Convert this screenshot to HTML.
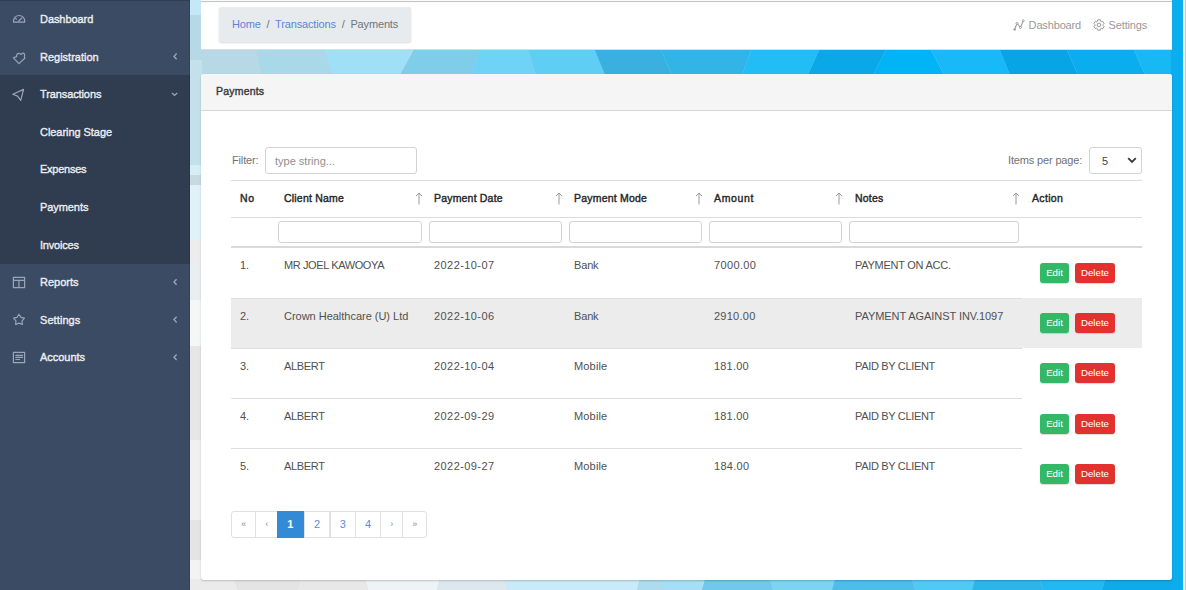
<!DOCTYPE html>
<html><head><meta charset="utf-8">
<style>
*{box-sizing:border-box;margin:0;padding:0}
html,body{width:1186px;height:590px;overflow:hidden;background:#fff;font-family:"Liberation Sans",sans-serif}
#sb{position:absolute;left:0;top:0;width:190px;height:590px;background:#3c4b64}
#sb .it{position:absolute;left:0;width:190px;height:37.6px;color:rgba(255,255,255,.82);font-size:11px;font-weight:normal;-webkit-text-stroke:0.45px rgba(255,255,255,.82)}
#sb .it span.t{position:absolute;left:40px;top:13px;line-height:12px}
#sb .ic{position:absolute;left:13px;top:12px;width:13px;height:13px}
#sb .car{position:absolute;left:172px;top:14px;width:8px;height:10px}
#sb .tl{position:absolute;left:0;top:0;width:190px;height:1px;background:#313d52}
#sb .rl{position:absolute;left:189px;top:0;width:1px;height:590px;background:rgba(0,0,0,.12)}
#sb .open{position:absolute;left:0;top:75px;width:190px;height:189px;background:#303c50}
#bg{position:absolute;left:190px;top:0;width:996px;height:590px}
.card{position:absolute;background:#fff}
#top{left:201px;top:0;width:971px;height:50px;border-bottom:1px solid #dcdce2}
#top .ln{position:absolute;left:0;top:1px;width:971px;height:1px;background:#c4c4c4;box-shadow:0 0 1px rgba(0,0,0,.2)}
#bc{position:absolute;left:18px;top:7px;width:192px;height:35px;background:#e8ebee;border-radius:2px;box-shadow:0 1px 2px rgba(0,0,0,.15);font-size:11px;color:#6c757d}
#bc .in{position:absolute;left:13px;top:12px;line-height:11px;white-space:nowrap;letter-spacing:-0.15px}
#bc a{color:#5a85d8;text-decoration:none}
#tr{position:absolute;right:24px;top:18px;font-size:11px;color:#8a9199;white-space:nowrap}
#main{left:201px;top:74px;width:971px;height:506px;border-radius:3px;box-shadow:0 1px 2px rgba(0,0,0,.2)}
#ch{position:absolute;left:0;top:0;width:971px;height:37px;background:#f5f5f5;border-bottom:1px solid #d6d6d6;border-radius:3px 3px 0 0}
#ch span{position:absolute;left:15px;top:12px;font-size:10.5px;font-weight:normal;-webkit-text-stroke:0.4px #3a3a3a;color:#3a3a3a;line-height:10.5px;letter-spacing:0.202px}
.abs{position:absolute;white-space:nowrap}
.tnav{font-size:11px;line-height:11px;color:#999;letter-spacing:-0.15px}
.lbl{font-size:11px;color:#727272;line-height:11px;letter-spacing:-0.15px}
.inp{position:absolute;background:#fff;border:1px solid #d2d2d2;border-radius:3px}
.ph{position:absolute;left:9px;top:7.5px;font-size:11px;color:#8f8f8f;line-height:11px;white-space:nowrap}
.hl{position:absolute;height:1px}
.th{font-size:10.5px;font-weight:normal;-webkit-text-stroke:0.4px #262626;color:#262626;line-height:10.5px}
.td{font-size:11px;color:#505050;line-height:11px}
.btn{position:absolute;height:20px;border-radius:3px;color:#fff;font-size:9.7px;line-height:20px;text-align:center;box-shadow:0 1px 1px rgba(0,0,0,.15)}
.g{background:#33b866}
.r{background:#e2322f}
.pg{position:absolute;top:511px;height:26.5px;border:1px solid #e0e0e0;background:#fff;color:#5b8bd6;font-size:11px;line-height:24.5px;text-align:center}
.pg.act{background:#338bd8;border-color:#338bd8;color:#fff;font-weight:bold;z-index:2}

</style></head><body>
<div id="bg">
<svg width="996" height="590" viewBox="0 0 996 590">
<rect x="0" y="0" width="996" height="590" fill="#9fd6ea"/>
<polygon points="0.0,48.0 66.0,48.0 72.0,75.0 0.0,75.0" fill="#b6d9e5"/>
<polygon points="66.0,48.0 133.0,48.0 143.0,75.0 72.0,75.0" fill="#a9d8e9"/>
<polygon points="133.0,48.0 225.0,48.0 210.0,75.0 143.0,75.0" fill="#a0e0f7"/>
<polygon points="225.0,48.0 291.0,48.0 281.0,75.0 210.0,75.0" fill="#80cdea"/>
<polygon points="291.0,48.0 338.0,48.0 346.0,75.0 281.0,75.0" fill="#6ed3f7"/>
<polygon points="338.0,48.0 404.0,48.0 415.0,75.0 346.0,75.0" fill="#5fcdf4"/>
<polygon points="404.0,48.0 470.0,48.0 482.0,75.0 415.0,75.0" fill="#3ab0e0"/>
<polygon points="470.0,48.0 562.0,48.0 552.0,75.0 482.0,75.0" fill="#33b4e7"/>
<polygon points="562.0,48.0 630.0,48.0 618.0,75.0 552.0,75.0" fill="#23bdf6"/>
<polygon points="630.0,48.0 697.0,48.0 683.0,75.0 618.0,75.0" fill="#0aa8e6"/>
<polygon points="697.0,48.0 740.0,48.0 754.0,75.0 683.0,75.0" fill="#00b4f5"/>
<polygon points="740.0,48.0 809.0,48.0 820.0,75.0 754.0,75.0" fill="#17baf7"/>
<polygon points="809.0,48.0 876.0,48.0 888.0,75.0 820.0,75.0" fill="#07a5e4"/>
<polygon points="876.0,48.0 943.0,48.0 955.0,75.0 888.0,75.0" fill="#0aaeee"/>
<polygon points="943.0,48.0 1000.0,48.0 1000.0,75.0 955.0,75.0" fill="#18b8f5"/>
<polygon points="0.0,0.0 12.0,0.0 12.0,15.0 0.0,15.0" fill="#c5e8f6"/>
<polygon points="0.0,15.0 12.0,15.0 12.0,60.0 0.0,60.0" fill="#b6d9e5"/>
<polygon points="0.0,60.0 12.0,60.0 12.0,165.0 0.0,165.0" fill="#c4e0ea"/>
<polygon points="0.0,165.0 12.0,165.0 12.0,175.0 0.0,175.0" fill="#d8eef5"/>
<polygon points="0.0,175.0 12.0,175.0 12.0,185.0 0.0,185.0" fill="#c6dbe1"/>
<polygon points="0.0,185.0 12.0,185.0 12.0,240.0 0.0,240.0" fill="#e0f2f8"/>
<polygon points="0.0,240.0 12.0,240.0 12.0,265.0 0.0,265.0" fill="#ececec"/>
<polygon points="0.0,265.0 12.0,265.0 12.0,300.0 0.0,300.0" fill="#e9eef0"/>
<polygon points="0.0,300.0 12.0,300.0 12.0,346.0 0.0,346.0" fill="#f5f6f6"/>
<polygon points="0.0,346.0 12.0,346.0 12.0,440.0 0.0,440.0" fill="#e6e6e6"/>
<polygon points="0.0,440.0 12.0,440.0 12.0,520.0 0.0,520.0" fill="#f0f0f0"/>
<polygon points="0.0,520.0 12.0,520.0 12.0,560.0 0.0,560.0" fill="#e4e4e4"/>
<polygon points="0.0,560.0 12.0,560.0 12.0,590.0 0.0,590.0" fill="#f3f3f3"/>
<polygon points="0.0,579.0 45.0,579.0 48.0,590.0 0.0,590.0" fill="#ebebeb"/>
<polygon points="45.0,579.0 110.0,579.0 107.0,590.0 48.0,590.0" fill="#e4e4e4"/>
<polygon points="110.0,579.0 175.0,579.0 178.0,590.0 107.0,590.0" fill="#e8e8e8"/>
<polygon points="175.0,579.0 250.0,579.0 247.0,590.0 178.0,590.0" fill="#eef3f6"/>
<polygon points="250.0,579.0 315.0,579.0 318.0,590.0 247.0,590.0" fill="#dce8ed"/>
<polygon points="315.0,579.0 450.0,579.0 447.0,590.0 318.0,590.0" fill="#c9ebf9"/>
<polygon points="450.0,579.0 470.0,579.0 473.0,590.0 447.0,590.0" fill="#acdcee"/>
<polygon points="470.0,579.0 515.0,579.0 512.0,590.0 473.0,590.0" fill="#a3e0f6"/>
<polygon points="515.0,579.0 580.0,579.0 583.0,590.0 512.0,590.0" fill="#72c8ec"/>
<polygon points="580.0,579.0 645.0,579.0 642.0,590.0 583.0,590.0" fill="#7cd3f4"/>
<polygon points="645.0,579.0 722.0,579.0 725.0,590.0 642.0,590.0" fill="#4fbde9"/>
<polygon points="722.0,579.0 785.0,579.0 782.0,590.0 725.0,590.0" fill="#52c9f5"/>
<polygon points="785.0,579.0 850.0,579.0 853.0,590.0 782.0,590.0" fill="#2db5ea"/>
<polygon points="850.0,579.0 915.0,579.0 912.0,590.0 853.0,590.0" fill="#22b9f2"/>
<polygon points="915.0,579.0 1000.0,579.0 1003.0,590.0 912.0,590.0" fill="#0faae8"/>
<polygon points="981.0,0.0 993.0,0.0 993.0,590.0 981.0,590.0" fill="#0aadee"/>
<polygon points="993.0,0.0 995.0,0.0 995.0,590.0 993.0,590.0" fill="#f4f4f4"/>
<polygon points="995.0,0.0 996.0,0.0 996.0,590.0 995.0,590.0" fill="#c8c8c8"/>
</svg>
</div>

<div id="sb">
 <div class="open"></div><div class="tl"></div><div class="rl"></div>
 <div class="it" style="top:0.0px"><span class="t" style="letter-spacing:-0.066px">Dashboard</span></div>
 <div class="it" style="top:37.6px"><span class="t" style="letter-spacing:-0.000px">Registration</span></div>
 <div class="it" style="top:75.2px"><span class="t" style="letter-spacing:-0.106px">Transactions</span></div>
 <div class="it" style="top:112.8px"><span class="t" style="letter-spacing:-0.052px">Clearing Stage</span></div>
 <div class="it" style="top:150.4px"><span class="t" style="letter-spacing:-0.259px">Expenses</span></div>
 <div class="it" style="top:188.0px"><span class="t" style="letter-spacing:-0.075px">Payments</span></div>
 <div class="it" style="top:225.6px"><span class="t" style="letter-spacing:-0.194px">Invoices</span></div>
 <div class="it" style="top:263.2px"><span class="t" style="letter-spacing:-0.005px">Reports</span></div>
 <div class="it" style="top:300.8px"><span class="t" style="letter-spacing:0.079px">Settings</span></div>
 <div class="it" style="top:338.4px"><span class="t" style="letter-spacing:-0.036px">Accounts</span></div>
<svg class="abs" style="left:0;top:0" width="190" height="590" viewBox="0 0 190 590">
<path d="M13.5 22.2 V21.1 A5.6 5.6 0 0 1 24.7 21.1 V22.2 Z" fill="none" stroke="#9aa5b7" stroke-width="1.2" stroke-linejoin="round" stroke-linecap="round"/>
<path d="M18.6 21.2 L22 17.9 M15.6 18.4 L16.4 19.1" fill="none" stroke="#9aa5b7" stroke-width="1.2" stroke-linejoin="round" stroke-linecap="round"/>
<path d="M13.4 57.8 L16.6 56.6 C16.2 54.4 18.2 52.3 20.2 53.8 L21.2 54.4 C22.2 52.4 24.8 52.7 24.6 55 L24.4 57 L24.8 58.2 L19 63.6 Z" fill="none" stroke="#9aa5b7" stroke-width="1.2" stroke-linejoin="round" stroke-linecap="round"/>
<path d="M12.8 94.3 L23.6 89.4 L20.7 100.4 L17.6 96.1 Z" fill="none" stroke="#9aa5b7" stroke-width="1.2" stroke-linejoin="round" stroke-linecap="round"/>
<path d="M13.4 277.4 H24.6 V287.6 H13.4 Z M13.4 280.3 H24.6 M18.9 280.3 V287.6" fill="none" stroke="#9aa5b7" stroke-width="1.2" stroke-linejoin="round" stroke-linecap="round"/>
<path d="M19.00 314.20 L20.88 317.31 L24.42 318.14 L22.04 320.89 L22.35 324.51 L19.00 323.10 L15.65 324.51 L15.96 320.89 L13.58 318.14 L17.12 317.31 Z" fill="none" stroke="#9aa5b7" stroke-width="1.2" stroke-linejoin="round" stroke-linecap="round"/>
<path d="M13.4 352.4 H24.6 V362.6 H13.4 Z M15.8 355.3 H22.6 M15.8 357.4 H22.6 M15.8 359.5 H19.6" fill="none" stroke="#9aa5b7" stroke-width="1.2" stroke-linejoin="round" stroke-linecap="round"/>
<path d="M176.6 53.6 L174 56.4 L176.6 59.2" fill="none" stroke="#97a3b6" stroke-width="1.4"/>
<path d="M172 92.9 L174.6 95.4 L177.2 92.9" fill="none" stroke="#97a3b6" stroke-width="1.4"/>
<path d="M176.6 279.2 L174 282 L176.6 284.8" fill="none" stroke="#97a3b6" stroke-width="1.4"/>
<path d="M176.6 316.8 L174 319.6 L176.6 322.4" fill="none" stroke="#97a3b6" stroke-width="1.4"/>
<path d="M176.6 354.4 L174 357.2 L176.6 360" fill="none" stroke="#97a3b6" stroke-width="1.4"/>
</svg>
</div>

<div class="card" id="top">
 <div id="bc"><div class="in"><a>Home</a> &nbsp;/&nbsp; <a>Transactions</a> &nbsp;/&nbsp; Payments</div></div>
 <div class="ln"></div>
 <svg class="abs" style="left:812px;top:19px" width="12" height="12" viewBox="0 0 12 12"><path d="M1.5 10.5 L4 4.5 L7.5 8.5 L10.3 1.5" fill="none" stroke="#9a9a9a" stroke-width="1.1"/><circle cx="1.6" cy="10.4" r="1.2" fill="#9a9a9a"/><circle cx="4" cy="4.5" r="1" fill="#fff" stroke="#9a9a9a" stroke-width="0.9"/><circle cx="7.5" cy="8.5" r="1" fill="#fff" stroke="#9a9a9a" stroke-width="0.9"/><circle cx="10.3" cy="1.7" r="1" fill="#fff" stroke="#9a9a9a" stroke-width="0.9"/></svg>
 <div class="abs tnav" style="left:827.6px;top:19.6px">Dashboard</div>
 <svg class="abs" style="left:892px;top:19px" width="12" height="12" viewBox="0 0 12 12"><path d="M4.26 2.40 L4.74 0.85 L7.26 0.85 L7.74 2.40 L8.25 2.69 L9.83 2.33 L11.09 4.52 L9.99 5.71 L9.99 6.29 L11.09 7.48 L9.83 9.67 L8.25 9.31 L7.74 9.60 L7.26 11.15 L4.74 11.15 L4.26 9.60 L3.75 9.31 L2.17 9.67 L0.91 7.48 L2.01 6.29 L2.01 5.71 L0.91 4.52 L2.17 2.33 L3.75 2.69 Z" fill="none" stroke="#9a9a9a" stroke-width="1" stroke-linejoin="round"/><circle cx="6" cy="6" r="1.8" fill="none" stroke="#9a9a9a" stroke-width="1"/></svg>
 <div class="abs tnav" style="left:907.6px;top:19.6px">Settings</div>
</div>

<div class="card" id="main">
 <div id="ch"><span>Payments</span></div>
</div>
<div class="abs lbl" style="left:232px;top:155px">Filter:</div>
<div class="inp" style="left:265px;top:147px;width:152px;height:27px"><span class="ph">type string...</span></div>
<div class="abs lbl" style="left:1008px;top:155px">Items per page:</div>
<div class="inp" style="left:1089px;top:147px;width:53px;height:27px"><span class="abs" style="left:12px;top:8px;font-size:11px;color:#444;line-height:11px">5</span><svg class="abs" style="left:37px;top:9px" width="10" height="7" viewBox="0 0 10 7"><path d="M1.2 1.2 L5 5 L8.8 1.2" fill="none" stroke="#343a40" stroke-width="1.8"/></svg></div>
<div class="hl" style="left:231px;top:180px;width:911px;background:#dcdcdc"></div>
<div class="hl" style="left:231px;top:217px;width:911px;background:#dcdcdc"></div>
<div class="hl" style="left:231px;top:246px;width:911px;height:2px;background:#d9d9d9"></div>
<div class="abs th" style="left:240px;top:193px;letter-spacing:0.562px">No</div>
<div class="abs th" style="left:284px;top:193px;letter-spacing:0.202px">Client Name</div>
<div class="abs th" style="left:434px;top:193px;letter-spacing:0.187px">Payment Date</div>
<div class="abs th" style="left:574px;top:193px;letter-spacing:0.207px">Payment Mode</div>
<div class="abs th" style="left:714px;top:193px;letter-spacing:0.662px">Amount</div>
<div class="abs th" style="left:855px;top:193px;letter-spacing:0.191px">Notes</div>
<div class="abs th" style="left:1032px;top:193px;letter-spacing:0.342px">Action</div>
<svg class="abs" style="left:415px;top:192px" width="8" height="14" viewBox="0 0 8 14"><path d="M4 1 V12.5 M1 4.1 L4 1 L7 4.1" fill="none" stroke="#9a9a9a" stroke-width="1"/></svg>
<svg class="abs" style="left:555px;top:192px" width="8" height="14" viewBox="0 0 8 14"><path d="M4 1 V12.5 M1 4.1 L4 1 L7 4.1" fill="none" stroke="#9a9a9a" stroke-width="1"/></svg>
<svg class="abs" style="left:695px;top:192px" width="8" height="14" viewBox="0 0 8 14"><path d="M4 1 V12.5 M1 4.1 L4 1 L7 4.1" fill="none" stroke="#9a9a9a" stroke-width="1"/></svg>
<svg class="abs" style="left:835px;top:192px" width="8" height="14" viewBox="0 0 8 14"><path d="M4 1 V12.5 M1 4.1 L4 1 L7 4.1" fill="none" stroke="#9a9a9a" stroke-width="1"/></svg>
<svg class="abs" style="left:1012px;top:192px" width="8" height="14" viewBox="0 0 8 14"><path d="M4 1 V12.5 M1 4.1 L4 1 L7 4.1" fill="none" stroke="#9a9a9a" stroke-width="1"/></svg>
<div class="inp" style="left:277.5px;top:221px;width:144.6px;height:21.5px"></div>
<div class="inp" style="left:428.8px;top:221px;width:133.2px;height:21.5px"></div>
<div class="inp" style="left:568.5px;top:221px;width:133.0px;height:21.5px"></div>
<div class="inp" style="left:709.0px;top:221px;width:133.0px;height:21.5px"></div>
<div class="inp" style="left:849.0px;top:221px;width:169.7px;height:21.5px"></div>
<div class="abs td" style="left:240px;top:260px">1.</div>
<div class="abs td" style="left:284px;top:260px;letter-spacing:-0.390px">MR JOEL KAWOOYA</div>
<div class="abs td" style="left:434px;top:260px;letter-spacing:0.424px">2022-10-07</div>
<div class="abs td" style="left:574px;top:260px;letter-spacing:-0.159px">Bank</div>
<div class="abs td" style="left:714px;top:260px;letter-spacing:0.356px">7000.00</div>
<div class="abs td" style="left:855px;top:260px;letter-spacing:-0.260px">PAYMENT ON ACC.</div>
<div class="btn g" style="left:1040px;top:263.0px;width:29px">Edit</div>
<div class="btn r" style="left:1075px;top:263.0px;width:40px">Delete</div>
<div class="abs" style="left:231px;top:298px;width:911px;height:50px;background:#ececec"></div>
<div class="hl" style="left:231px;top:298px;width:791px;background:#dedede"></div>
<div class="abs td" style="left:240px;top:311px">2.</div>
<div class="abs td" style="left:284px;top:311px;letter-spacing:-0.018px">Crown Healthcare (U) Ltd</div>
<div class="abs td" style="left:434px;top:311px;letter-spacing:0.424px">2022-10-06</div>
<div class="abs td" style="left:574px;top:311px;letter-spacing:-0.159px">Bank</div>
<div class="abs td" style="left:714px;top:311px;letter-spacing:0.256px">2910.00</div>
<div class="abs td" style="left:855px;top:311px;letter-spacing:-0.065px">PAYMENT AGAINST INV.1097</div>
<div class="btn g" style="left:1040px;top:313.2px;width:29px">Edit</div>
<div class="btn r" style="left:1075px;top:313.2px;width:40px">Delete</div>
<div class="hl" style="left:231px;top:348px;width:791px;background:#dedede"></div>
<div class="abs td" style="left:240px;top:361px">3.</div>
<div class="abs td" style="left:284px;top:361px;letter-spacing:-0.339px">ALBERT</div>
<div class="abs td" style="left:434px;top:361px;letter-spacing:0.424px">2022-10-04</div>
<div class="abs td" style="left:574px;top:361px;letter-spacing:0.159px">Mobile</div>
<div class="abs td" style="left:714px;top:361px;letter-spacing:0.189px">181.00</div>
<div class="abs td" style="left:855px;top:361px;letter-spacing:-0.328px">PAID BY CLIENT</div>
<div class="btn g" style="left:1040px;top:363.4px;width:29px">Edit</div>
<div class="btn r" style="left:1075px;top:363.4px;width:40px">Delete</div>
<div class="hl" style="left:231px;top:398px;width:791px;background:#dedede"></div>
<div class="abs td" style="left:240px;top:411px">4.</div>
<div class="abs td" style="left:284px;top:411px;letter-spacing:-0.339px">ALBERT</div>
<div class="abs td" style="left:434px;top:411px;letter-spacing:0.424px">2022-09-29</div>
<div class="abs td" style="left:574px;top:411px;letter-spacing:0.159px">Mobile</div>
<div class="abs td" style="left:714px;top:411px;letter-spacing:0.189px">181.00</div>
<div class="abs td" style="left:855px;top:411px;letter-spacing:-0.328px">PAID BY CLIENT</div>
<div class="btn g" style="left:1040px;top:413.6px;width:29px">Edit</div>
<div class="btn r" style="left:1075px;top:413.6px;width:40px">Delete</div>
<div class="hl" style="left:231px;top:448px;width:791px;background:#dedede"></div>
<div class="abs td" style="left:240px;top:461px">5.</div>
<div class="abs td" style="left:284px;top:461px;letter-spacing:-0.339px">ALBERT</div>
<div class="abs td" style="left:434px;top:461px;letter-spacing:0.424px">2022-09-27</div>
<div class="abs td" style="left:574px;top:461px;letter-spacing:0.159px">Mobile</div>
<div class="abs td" style="left:714px;top:461px;letter-spacing:0.289px">184.00</div>
<div class="abs td" style="left:855px;top:461px;letter-spacing:-0.328px">PAID BY CLIENT</div>
<div class="btn g" style="left:1040px;top:463.8px;width:29px">Edit</div>
<div class="btn r" style="left:1075px;top:463.8px;width:40px">Delete</div>
<div class="pg" style="left:231.0px;width:25.3px;border-radius:3px 0 0 3px;font-size:9px;color:#7f8db0">&laquo;</div>
<div class="pg" style="left:255.3px;width:22.7px;font-size:9px;color:#7f8db0">&lsaquo;</div>
<div class="pg act" style="left:277.0px;width:26.7px">1</div>
<div class="pg" style="left:303.7px;width:26.8px">2</div>
<div class="pg" style="left:329.5px;width:26.5px">3</div>
<div class="pg" style="left:355.0px;width:26.3px">4</div>
<div class="pg" style="left:380.3px;width:23.1px;font-size:9px;color:#7f8db0">&rsaquo;</div>
<div class="pg" style="left:402.4px;width:24.7px;border-radius:0 3px 3px 0;font-size:9px;color:#7f8db0">&raquo;</div>
</body></html>
